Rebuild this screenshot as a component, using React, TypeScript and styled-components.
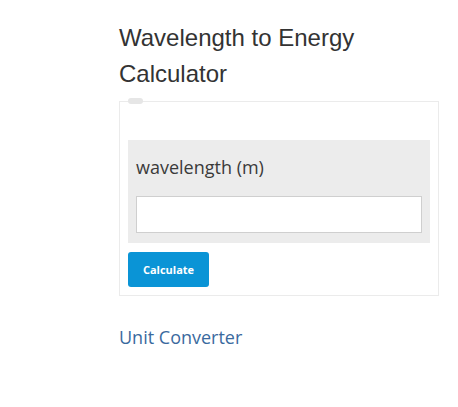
import React from "react";
import styled, { createGlobalStyle } from "styled-components";

const Global = createGlobalStyle`
  html, body { margin: 0; padding: 0; background: #ffffff; }
  body { font-family: "Open Sans", "Liberation Sans", Arial, sans-serif; color: #333333; }
`;

const Page = styled.div`
  padding: 20px 0 0 119px;
  width: 320px;
`;

const Title = styled.h1`
  margin: 0 0 9px;
  font-family: "Liberation Sans", Arial, Helvetica, sans-serif;
  font-size: 24px;
  line-height: 36px;
  font-weight: normal;
  color: #333333;
`;

const Card = styled.div`
  position: relative;
  border: 1px solid #ebebeb;
  padding: 38px 8px 8px;
`;

const Tab = styled.span`
  position: absolute;
  left: 8px;
  top: -4px;
  width: 15px;
  height: 6px;
  border-radius: 3px;
  background: #e6e6e6;
`;

const Field = styled.div`
  display: flex;
  flex-direction: column;
  gap: 15px;
  background: #ececec;
  padding: 14px 8px 10px;
`;

const Label = styled.label`
  font-size: 18px;
  line-height: 27px;
  color: #3a3a3a;
`;

const Input = styled.input`
  box-sizing: border-box;
  width: 100%;
  height: 37px;
  border: 1px solid #cfcfcf;
  background: #ffffff;
  margin: 0;
  padding: 0 8px;
  outline: none;
`;

const Button = styled.button`
  display: block;
  margin-top: 9px;
  width: 81px;
  height: 35px;
  border: none;
  border-radius: 3px;
  background: #0a94d6;
  color: #ffffff;
  font-family: "Open Sans", "Liberation Sans", Arial, sans-serif;
  font-weight: bold;
  font-size: 11px;
  padding: 0;
  cursor: pointer;
`;

const Link = styled.a`
  display: inline-block;
  margin-top: 28px;
  font-size: 18px;
  line-height: 27px;
  color: #3a6a9e;
  text-decoration: none;
`;

export default function App() {
  return (
    <>
      <Global />
      <Page>
        <Title>Wavelength to Energy Calculator</Title>
        <Card>
          <Tab />
          <Field>
            <Label htmlFor="wl">wavelength (m)</Label>
            <Input id="wl" type="text" />
          </Field>
          <Button type="button">Calculate</Button>
        </Card>
        <Link href="#">Unit Converter</Link>
      </Page>
    </>
  );
}
